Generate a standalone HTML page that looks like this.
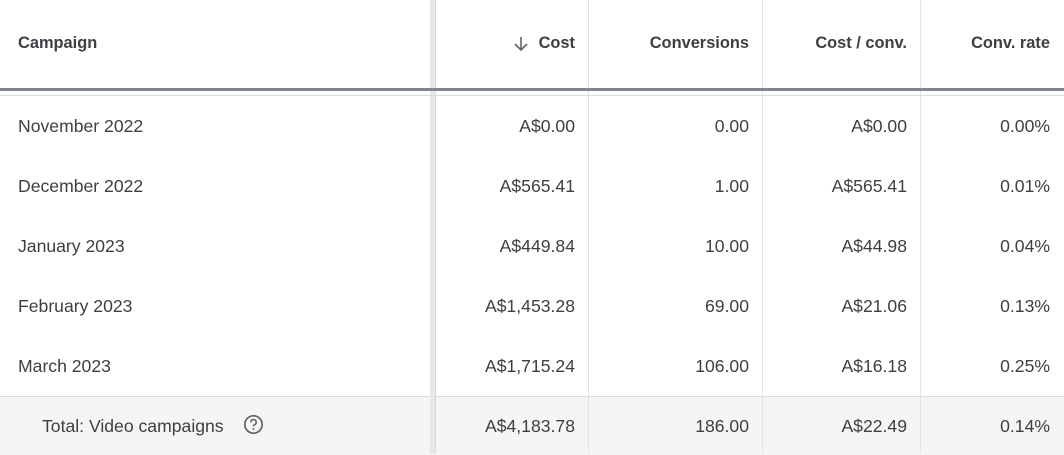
<!DOCTYPE html>
<html><head><style>
body{margin:0;width:1064px;height:454px;background:#fff;font-family:"Liberation Sans",Arial,sans-serif;color:#3c4043;position:relative;overflow:hidden}
.a{position:absolute}
.t{position:absolute;font-size:17.6px;white-space:nowrap;line-height:20px}
.h{font-weight:bold;font-size:16.4px;color:#3c4043}
.r{text-align:right}
.vl{position:absolute;top:0;width:1px;height:454px;background:#e3e3e3}
</style></head><body>
<div class="a" style="left:0;top:396px;width:1064px;height:58px;background:#f5f5f5;border-top:1px solid #dadce0"></div>
<div class="a" style="left:430px;top:0;width:5px;height:454px;background:#e8e8e8;border-right:1px solid #d8d8d8"></div>
<div class="vl" style="left:588px"></div>
<div class="vl" style="left:762px"></div>
<div class="vl" style="left:920px"></div>
<div class="a" style="left:0;top:88px;width:1064px;height:3px;background:#80868b"></div>
<div class="a" style="left:0;top:95px;width:1064px;height:1px;background:#dadce0"></div>
<div class="t h" style="left:18px;top:33px">Campaign</div>
<svg class="a" style="left:512px;top:35px" width="18" height="18" viewBox="0 0 18 18"><path d="M9 2v13M3 9l6 6 6-6" fill="none" stroke="#5f6368" stroke-width="1.6"/></svg>
<div class="t h r" style="right:489px;top:33px">Cost</div>
<div class="t h r" style="right:315px;top:33px">Conversions</div>
<div class="t h r" style="right:157px;top:33px">Cost / conv.</div>
<div class="t h r" style="right:14px;top:33px">Conv. rate</div>

<div class="t" style="left:18px;top:116px">November 2022</div>
<div class="t r" style="right:489px;top:116px">A$0.00</div>
<div class="t r" style="right:315px;top:116px">0.00</div>
<div class="t r" style="right:157px;top:116px">A$0.00</div>
<div class="t r" style="right:14px;top:116px">0.00%</div>

<div class="t" style="left:18px;top:176px">December 2022</div>
<div class="t r" style="right:489px;top:176px">A$565.41</div>
<div class="t r" style="right:315px;top:176px">1.00</div>
<div class="t r" style="right:157px;top:176px">A$565.41</div>
<div class="t r" style="right:14px;top:176px">0.01%</div>

<div class="t" style="left:18px;top:236px">January 2023</div>
<div class="t r" style="right:489px;top:236px">A$449.84</div>
<div class="t r" style="right:315px;top:236px">10.00</div>
<div class="t r" style="right:157px;top:236px">A$44.98</div>
<div class="t r" style="right:14px;top:236px">0.04%</div>

<div class="t" style="left:18px;top:296px">February 2023</div>
<div class="t r" style="right:489px;top:296px">A$1,453.28</div>
<div class="t r" style="right:315px;top:296px">69.00</div>
<div class="t r" style="right:157px;top:296px">A$21.06</div>
<div class="t r" style="right:14px;top:296px">0.13%</div>

<div class="t" style="left:18px;top:356px">March 2023</div>
<div class="t r" style="right:489px;top:356px">A$1,715.24</div>
<div class="t r" style="right:315px;top:356px">106.00</div>
<div class="t r" style="right:157px;top:356px">A$16.18</div>
<div class="t r" style="right:14px;top:356px">0.25%</div>

<div class="t" style="left:42px;top:416px">Total: Video campaigns</div>
<svg class="a" style="left:243px;top:414px" width="21" height="21" viewBox="0 0 21 21"><circle cx="10.5" cy="10.5" r="8.7" fill="none" stroke="#5f6368" stroke-width="1.7"/><path d="M7.8 8.3a2.7 2.7 0 1 1 3.8 2.4c-.8.4-1.1.9-1.1 1.8" fill="none" stroke="#5f6368" stroke-width="1.6"/><circle cx="10.5" cy="15" r="1" fill="#5f6368"/></svg>
<div class="t r" style="right:489px;top:416px">A$4,183.78</div>
<div class="t r" style="right:315px;top:416px">186.00</div>
<div class="t r" style="right:157px;top:416px">A$22.49</div>
<div class="t r" style="right:14px;top:416px">0.14%</div>
</body></html>
